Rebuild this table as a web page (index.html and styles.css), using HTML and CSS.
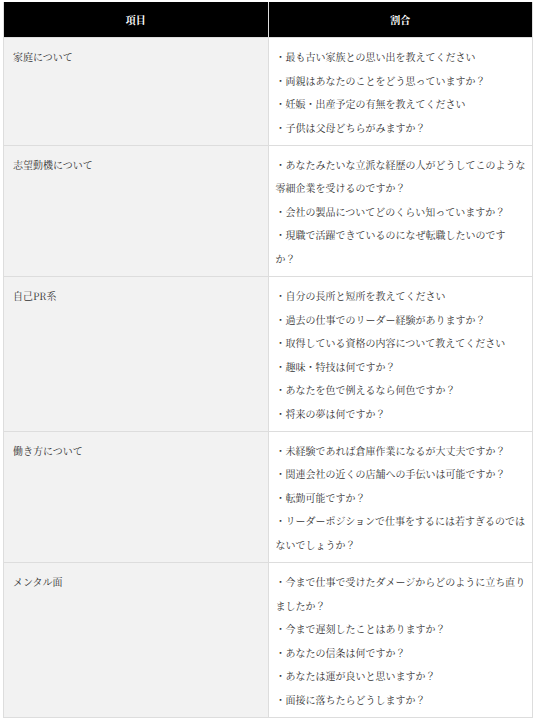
FILE: index.html
```html
<!DOCTYPE html>
<html lang="ja">
<head>
<meta charset="utf-8">
<link rel="stylesheet" href="styles.css">
</head>
<body>
<div class="wrap">
<table class="qa">
  <thead>
    <tr><th>項目</th><th>割合</th></tr>
  </thead>
  <tbody>
    <tr>
      <td class="cat"><div class="ln">家庭について</div></td>
      <td class="items">
        <div class="ln">・最も古い家族との思い出を教えてください</div>
        <div class="ln">・両親はあなたのことをどう思っていますか？</div>
        <div class="ln">・妊娠・出産予定の有無を教えてください</div>
        <div class="ln">・子供は父母どちらがみますか？</div>
      </td>
    </tr>
    <tr>
      <td class="cat"><div class="ln">志望動機について</div></td>
      <td class="items">
        <div class="ln">・あなたみたいな立派な経歴の人がどうしてこのような零細企業を受けるのですか？</div>
        <div class="ln">・会社の製品についてどのくらい知っていますか？</div>
        <div class="ln">・現職で活躍できているのになぜ転職したいのです<br>か？</div>
      </td>
    </tr>
    <tr>
      <td class="cat"><div class="ln">自己PR系</div></td>
      <td class="items">
        <div class="ln">・自分の長所と短所を教えてください</div>
        <div class="ln">・過去の仕事でのリーダー経験がありますか？</div>
        <div class="ln">・取得している資格の内容について教えてください</div>
        <div class="ln">・趣味・特技は何ですか？</div>
        <div class="ln">・あなたを色で例えるなら何色ですか？</div>
        <div class="ln">・将来の夢は何ですか？</div>
      </td>
    </tr>
    <tr>
      <td class="cat"><div class="ln">働き方について</div></td>
      <td class="items">
        <div class="ln">・未経験であれば倉庫作業になるが大丈夫ですか？</div>
        <div class="ln">・関連会社の近くの店舗への手伝いは可能ですか？</div>
        <div class="ln">・転勤可能ですか？</div>
        <div class="ln">・リーダーポジションで仕事をするには若すぎるのではないでしょうか？</div>
      </td>
    </tr>
    <tr>
      <td class="cat"><div class="ln">メンタル面</div></td>
      <td class="items">
        <div class="ln">・今まで仕事で受けたダメージからどのように立ち直りましたか？</div>
        <div class="ln">・今まで遅刻したことはありますか？</div>
        <div class="ln">・あなたの信条は何ですか？</div>
        <div class="ln">・あなたは運が良いと思いますか？</div>
        <div class="ln">・面接に落ちたらどうしますか？</div>
      </td>
    </tr>
  </tbody>
</table>
</div>
</body>
</html>
```
FILE: styles.css
```css
html, body {
  margin: 0;
  padding: 0;
  background: #fff;
}
.wrap {
  padding: 2px 3px 0 3px;
}
.qa {
  width: 530px;
  border-collapse: collapse;
  table-layout: fixed;
  font-family: "Noto Serif CJK JP", serif;
  font-size: 10px;
  color: #333;
}
.qa th {
  background: #000;
  color: #fff;
  font-weight: bold;
  height: 35px;
  padding: 0;
  text-align: center;
  border: 1px solid #ddd;
  border-top: 0;
  line-height: 35px;
}
.qa th + th {
  border-left: 1px solid #555;
}
.qa td {
  border: 1px solid #ddd;
  vertical-align: top;
  padding: 7px 6px 5.75px 9px;
  width: 50%;
}
.ln {
  line-height: 23.5px;
}
.qa td.cat {
  background: #f2f2f2;
}
.qa td.items {
  background: #fff;
  padding-left: 7px;
}
```
